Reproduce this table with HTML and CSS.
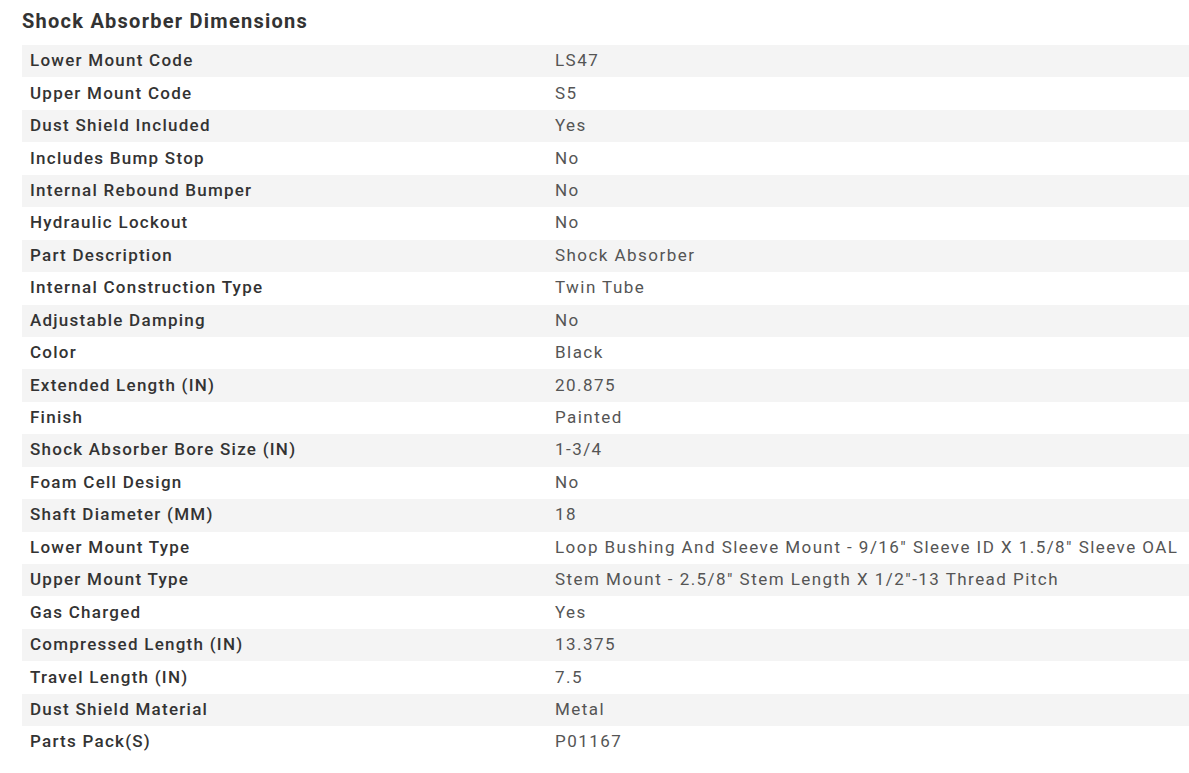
FILE: index.html
```html
<!DOCTYPE html>
<html>
<head>
<meta charset="utf-8">
<link rel="stylesheet" href="styles.css">
</head>
<body>
<section class="specs">
  <h2 class="specs-title">Shock Absorber Dimensions</h2>
  <div class="spec-table">
    <div class="spec-row"><div class="spec-label">Lower Mount Code</div><div class="spec-value">LS47</div></div>
    <div class="spec-row"><div class="spec-label">Upper Mount Code</div><div class="spec-value">S5</div></div>
    <div class="spec-row"><div class="spec-label">Dust Shield Included</div><div class="spec-value">Yes</div></div>
    <div class="spec-row"><div class="spec-label">Includes Bump Stop</div><div class="spec-value">No</div></div>
    <div class="spec-row"><div class="spec-label">Internal Rebound Bumper</div><div class="spec-value">No</div></div>
    <div class="spec-row"><div class="spec-label">Hydraulic Lockout</div><div class="spec-value">No</div></div>
    <div class="spec-row"><div class="spec-label">Part Description</div><div class="spec-value">Shock Absorber</div></div>
    <div class="spec-row"><div class="spec-label">Internal Construction Type</div><div class="spec-value">Twin Tube</div></div>
    <div class="spec-row"><div class="spec-label">Adjustable Damping</div><div class="spec-value">No</div></div>
    <div class="spec-row"><div class="spec-label">Color</div><div class="spec-value">Black</div></div>
    <div class="spec-row"><div class="spec-label">Extended Length (IN)</div><div class="spec-value">20.875</div></div>
    <div class="spec-row"><div class="spec-label">Finish</div><div class="spec-value">Painted</div></div>
    <div class="spec-row"><div class="spec-label">Shock Absorber Bore Size (IN)</div><div class="spec-value">1-3/4</div></div>
    <div class="spec-row"><div class="spec-label">Foam Cell Design</div><div class="spec-value">No</div></div>
    <div class="spec-row"><div class="spec-label">Shaft Diameter (MM)</div><div class="spec-value">18</div></div>
    <div class="spec-row"><div class="spec-label">Lower Mount Type</div><div class="spec-value">Loop Bushing And Sleeve Mount - 9/16" Sleeve ID X 1.5/8" Sleeve OAL</div></div>
    <div class="spec-row"><div class="spec-label">Upper Mount Type</div><div class="spec-value">Stem Mount - 2.5/8" Stem Length X 1/2"-13 Thread Pitch</div></div>
    <div class="spec-row"><div class="spec-label">Gas Charged</div><div class="spec-value">Yes</div></div>
    <div class="spec-row"><div class="spec-label">Compressed Length (IN)</div><div class="spec-value">13.375</div></div>
    <div class="spec-row"><div class="spec-label">Travel Length (IN)</div><div class="spec-value">7.5</div></div>
    <div class="spec-row"><div class="spec-label">Dust Shield Material</div><div class="spec-value">Metal</div></div>
    <div class="spec-row"><div class="spec-label">Parts Pack(S)</div><div class="spec-value">P01167</div></div>
  </div>
</section>
</body>
</html>
```
FILE: styles.css
```css
html, body {
  margin: 0;
  padding: 0;
  background: #ffffff;
}
body {
  font-family: Roboto, "Liberation Sans", sans-serif;
  overflow: hidden;
}
.specs {
  padding: 7px 0 0 22px;
}
.specs-title {
  margin: 0;
  height: 38px;
  font-size: 20px;
  line-height: 28px;
  font-weight: 700;
  color: #333333;
  letter-spacing: 1.25px;
}
.spec-table {
  display: flex;
  flex-direction: column;
  width: 1167px;
}
.spec-row {
  display: grid;
  grid-template-columns: 525px 1fr;
  height: 32.45px;
  align-items: center;
}
.spec-row:nth-child(odd) {
  background: #f4f4f4;
}
.spec-label {
  padding-left: 8px;
  padding-bottom: 2px;
  font-size: 17px;
  font-weight: 500;
  color: #333333;
  letter-spacing: 1.25px;
  white-space: nowrap;
}
.spec-value {
  padding-left: 8px;
  padding-bottom: 2px;
  font-size: 17px;
  font-weight: 400;
  color: #555555;
  letter-spacing: 1.45px;
  white-space: nowrap;
}
```
